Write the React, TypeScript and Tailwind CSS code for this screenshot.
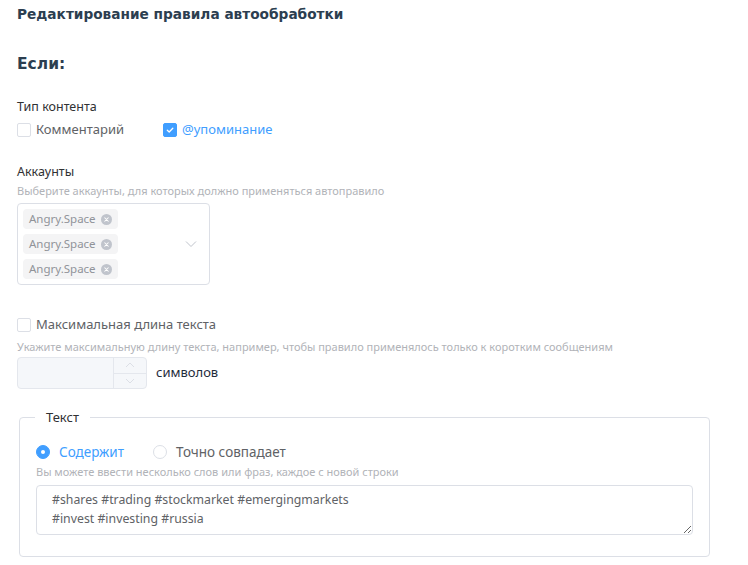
import React from 'react';

const font = "font-['Noto_Sans','DejaVu_Sans',sans-serif]";
const headFont = "font-['DejaVu_Sans','Verdana',sans-serif]";

function Checkbox({ checked = false, label }: { checked?: boolean; label: string }) {
  return (
    <label className="flex items-center h-[20px] cursor-pointer">
      <span
        className={`w-[14px] h-[14px] rounded-[2px] border flex items-center justify-center ${
          checked ? 'bg-[#409eff] border-[#409eff]' : 'bg-white border-[#dcdfe6]'
        }`}
      >
        {checked && (
          <svg width="10" height="10" viewBox="0 0 10 10" fill="none">
            <path d="M2.3 5.2 4.2 7 7.8 3.2" stroke="white" strokeWidth="1.3" strokeLinecap="round" strokeLinejoin="round" />
          </svg>
        )}
      </span>
      <span className={`ml-[5px] text-[13px] ${checked ? 'text-[#409eff]' : 'text-[#606266]'}`}>{label}</span>
    </label>
  );
}

function Radio({ checked = false, label }: { checked?: boolean; label: string }) {
  return (
    <label className="flex items-center h-[20px] cursor-pointer">
      <span
        className={`w-[14px] h-[14px] rounded-full border flex items-center justify-center ${
          checked ? 'bg-[#409eff] border-[#409eff]' : 'bg-white border-[#dcdfe6]'
        }`}
      >
        {checked && <span className="w-[4px] h-[4px] rounded-full bg-white" />}
      </span>
      <span className={`ml-[9px] text-[13.5px] ${checked ? 'text-[#409eff]' : 'text-[#606266]'}`}>{label}</span>
    </label>
  );
}

function Tag({ label }: { label: string }) {
  return (
    <span className="inline-flex items-center h-[20px] px-[6px] rounded-[4px] bg-[#f4f4f5] text-[#909399] text-[11.5px]">
      {label}
      <span className="ml-[5px] w-[11px] h-[11px] rounded-full bg-[#c0c4cc] flex items-center justify-center">
        <svg width="7" height="7" viewBox="0 0 8 8">
          <path d="M2 2 6 6M6 2 2 6" stroke="white" strokeWidth="1.2" strokeLinecap="round" />
        </svg>
      </span>
    </span>
  );
}

export default function App() {
  return (
    <div className={`min-h-screen bg-white ${font} pl-[17px] pr-[38px] pt-[4px] pb-[8px]`}>
      <h1 className={`${headFont} text-[13.7px] leading-[20px] font-bold text-[#2c3e50]`}>
        Редактирование правила автообработки
      </h1>

      <h2 className={`${headFont} mt-[29px] text-[15.5px] leading-[22px] font-bold text-[#2c3e50]`}>Если:</h2>

      <div className="mt-[23px] text-[12.5px] leading-[18px] text-[#303133]">Тип контента</div>
      <div className="mt-[4px] flex items-center">
        <div className="w-[146px]">
          <Checkbox label="Комментарий" />
        </div>
        <Checkbox checked label="@упоминание" />
      </div>

      <div className="mt-[23px] text-[12.5px] leading-[18px] text-[#303133]">Аккаунты</div>
      <div className="mt-[3px] text-[11px] leading-[14px] text-[#b1b3b8]">
        Выберите аккаунты, для которых должно применяться автоправило
      </div>
      <div className="mt-[5px] w-[193px] h-[82px] border border-[#dcdfe6] rounded-[4px] flex items-center pl-[5px] pr-[12px]">
        <div className="flex-1 flex flex-col items-start gap-[5px]">
          <Tag label="Angry.Space" />
          <Tag label="Angry.Space" />
          <Tag label="Angry.Space" />
        </div>
        <svg width="12" height="8" viewBox="0 0 12 8" fill="none">
          <path d="M1 1.5 6 6.5 11 1.5" stroke="#c0c4cc" strokeWidth="1" />
        </svg>
      </div>

      <div className="mt-[30px]">
        <Checkbox label="Максимальная длина текста" />
      </div>
      <div className="mt-[5px] text-[11px] leading-[14px] text-[#b1b3b8]">
        Укажите максимальную длину текста, например, чтобы правило применялось только к коротким сообщениям
      </div>
      <div className="mt-[3px] flex items-center">
        <div className="w-[130px] h-[32px] border border-[#e4e7ed] rounded-[4px] bg-[#f5f7fa] flex overflow-hidden">
          <div className="flex-1" />
          <div className="w-[33px] border-l border-[#e4e7ed] flex flex-col">
            <div className="flex-1 flex items-center justify-center border-b border-[#e4e7ed]">
              <svg width="10" height="6" viewBox="0 0 10 6" fill="none">
                <path d="M1 5 5 1 9 5" stroke="#dcdfe6" strokeWidth="1" />
              </svg>
            </div>
            <div className="flex-1 flex items-center justify-center">
              <svg width="10" height="6" viewBox="0 0 10 6" fill="none">
                <path d="M1 1 5 5 9 1" stroke="#dcdfe6" strokeWidth="1" />
              </svg>
            </div>
          </div>
        </div>
        <span className="ml-[9px] text-[13px] text-[#1f2d3d]">символов</span>
      </div>

      <fieldset className="mt-[19px] ml-[2px] border border-[#dcdfe6] rounded-[4px] px-[16px] pb-[21px]">
        <legend className="ml-[-1px] px-[11px] text-[13px] leading-[18px] text-[#303133]">Текст</legend>
        <div className="mt-[16px] flex items-center">
          <div className="w-[117px]">
            <Radio checked label="Содержит" />
          </div>
          <Radio label="Точно совпадает" />
        </div>
        <div className="mt-[3px] text-[11px] leading-[14px] text-[#b1b3b8]">
          Вы можете ввести несколько слов или фраз, каждое с новой строки
        </div>
        <textarea
          readOnly
          className={`mt-[6px] block w-full h-[50px] border border-[#dcdfe6] rounded-[4px] pl-[15px] pr-[10px] py-[4px] text-[12.3px] leading-[19px] text-[#606266] outline-none ${font}`}
          value={'#shares #trading #stockmarket #emergingmarkets\n#invest #investing #russia'}
        />
      </fieldset>
    </div>
  );
}
